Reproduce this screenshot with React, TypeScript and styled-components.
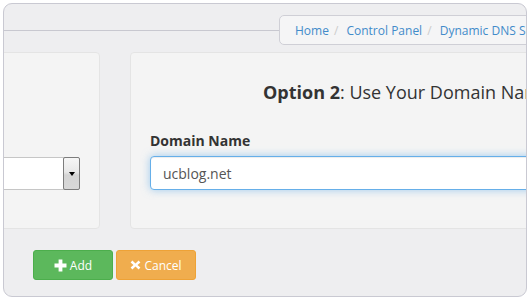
import styled, { createGlobalStyle } from "styled-components";

const GlobalStyle = createGlobalStyle`
  body {
    margin: 0;
    background: #fff;
    font-family: "Open Sans", "Liberation Sans", sans-serif;
  }
`;

const Frame = styled.div`
  margin: 3px;
  height: 294px;
  box-sizing: border-box;
  border: 1px solid #c9c9d2;
  border-radius: 9px;
  background: #eeeef0;
  overflow: hidden;
`;

const Header = styled.div`
  display: flex;
  align-items: center;
  padding-top: 11px;
`;

const HeaderRule = styled.div`
  flex: 0 0 275px;
  height: 1px;
  background: #c8c8d0;
`;

const Breadcrumb = styled.ol`
  display: flex;
  align-items: center;
  flex-shrink: 0;
  list-style: none;
  margin: 0;
  padding: 0 15px;
  height: 30px;
  box-sizing: border-box;
  border: 1px solid #cfcfd6;
  border-radius: 5px;
  background: #f5f5f6;
  white-space: nowrap;
  font-size: 12px;
`;

const Crumb = styled.li`
  color: #428bca;

  & + &::before {
    content: "/\\00a0";
    padding: 0 5px;
    color: #ccc;
  }
`;

const PanelRow = styled.div`
  display: flex;
  gap: 30px;
  margin: 7px 0 0 -104px;
`;

const Panel = styled.div<{ $width: number; $padTop: number }>`
  flex-shrink: 0;
  width: ${(p) => p.$width}px;
  height: 177px;
  box-sizing: border-box;
  padding: ${(p) => p.$padTop}px 19px 0;
  border: 1px solid #e4e4e4;
  border-radius: 4px;
  background: #f4f4f4;
`;

const Heading = styled.h3`
  margin: 0 0 27px;
  font-size: 18px;
  line-height: 24px;
  font-weight: normal;
  text-align: center;
  color: #333;

  strong {
    font-weight: bold;
  }
`;

const Label = styled.label`
  display: block;
  margin-bottom: 5px;
  font-size: 14px;
  line-height: 20px;
  font-weight: bold;
  color: #333;
`;

const TextInput = styled.input`
  display: block;
  width: 100%;
  height: 34px;
  box-sizing: border-box;
  padding: 6px 12px;
  font-family: inherit;
  font-size: 14px;
  color: #555;
  background: #fff;
  border: 1px solid #66afe9;
  border-radius: 4px;
  outline: none;
  box-shadow: inset 0 1px 1px rgba(0, 0, 0, 0.075), 0 0 8px rgba(102, 175, 233, 0.6);
`;

const SelectBox = styled.div`
  display: flex;
  justify-content: flex-end;
  height: 33px;
  box-sizing: border-box;
  border: 1px solid #c6c6c6;
  border-right: 0;
  border-radius: 3px;
  background: #fff;
`;

const SelectArrow = styled.div`
  display: flex;
  align-items: center;
  justify-content: center;
  width: 17px;
  height: calc(100% + 2px);
  margin: -1px 0;
  box-sizing: border-box;
  border: 1px solid #7c7c7c;
  border-radius: 2px;
  background: linear-gradient(#f6f6f6, #e8e8e8 45%, #d4d4d4 55%, #d8d8d8);

  &::after {
    content: "";
    border-left: 3.5px solid transparent;
    border-right: 3.5px solid transparent;
    border-top: 4px solid #000;
  }
`;

const ButtonRow = styled.div`
  display: flex;
  gap: 3px;
  margin: 21px 0 0 29px;
`;

const Button = styled.button<{ $variant: "success" | "warning" }>`
  display: inline-flex;
  align-items: center;
  justify-content: center;
  gap: 3px;
  width: 80px;
  height: 30px;
  padding: 0;
  border: 1px solid ${(p) => (p.$variant === "success" ? "#4cae4c" : "#eea236")};
  border-radius: 3px;
  background: ${(p) => (p.$variant === "success" ? "#5cb85c" : "#f0ad4e")};
  color: #fff;
  font-family: inherit;
  font-size: 12px;

  svg {
    fill: currentColor;
    flex-shrink: 0;
  }
`;

const PlusIcon = () => (
  <svg width="13" height="13" viewBox="0 0 13 13">
    <path d="M4.6 0.5h3.8v4.1h4.1v3.8H8.4v4.1H4.6V8.4H0.5V4.6h4.1z" />
  </svg>
);

const TimesIcon = () => (
  <svg width="11" height="10" viewBox="0 0 11 10">
    <path d="M0.6 2.4 2.4 0.6 5.5 3.4 8.6 0.6 10.4 2.4 7.5 5 10.4 7.6 8.6 9.4 5.5 6.6 2.4 9.4 0.6 7.6 3.5 5z" />
  </svg>
);

export default function App() {
  return (
    <>
      <GlobalStyle />
      <Frame>
        <Header>
          <HeaderRule />
          <Breadcrumb>
            <Crumb>Home</Crumb>
            <Crumb>Control Panel</Crumb>
            <Crumb>Dynamic DNS Service</Crumb>
          </Breadcrumb>
        </Header>
        <PanelRow>
          <Panel $width={200} $padTop={104}>
            <SelectBox>
              <SelectArrow />
            </SelectBox>
          </Panel>
          <Panel $width={554} $padTop={27}>
            <Heading>
              <strong>Option 2</strong>: Use Your Domain Name
            </Heading>
            <Label>Domain Name</Label>
            <TextInput defaultValue="ucblog.net" />
          </Panel>
        </PanelRow>
        <ButtonRow>
          <Button $variant="success">
            <PlusIcon /> Add
          </Button>
          <Button $variant="warning">
            <TimesIcon /> Cancel
          </Button>
        </ButtonRow>
      </Frame>
    </>
  );
}
